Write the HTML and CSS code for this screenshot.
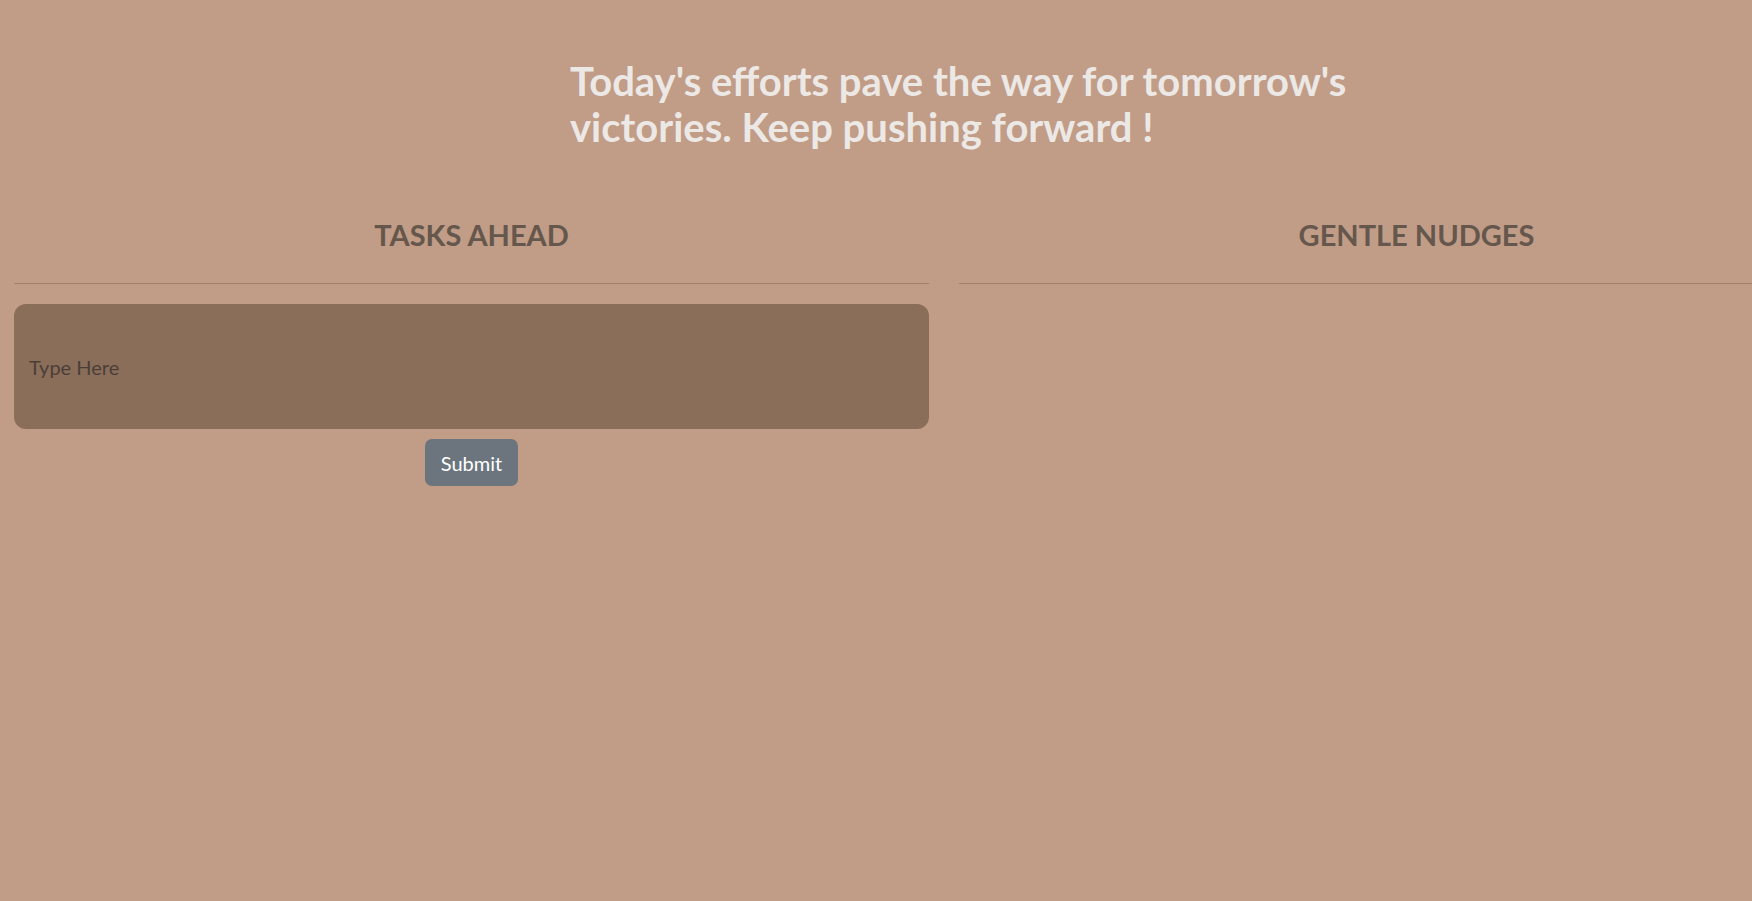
FILE: index.html
```html
<!DOCTYPE html>
<html lang="en">
<head>
<meta charset="utf-8">
<title>Tasks</title>
<link rel="stylesheet" href="styles.css">
</head>
<body>
<header class="hero">
  <h1 class="hero-title">Today's efforts pave the way for tomorrow's<br>victories. Keep pushing forward !</h1>
</header>
<main class="board">
  <section class="column">
    <h2 class="column-title">TASKS AHEAD</h2>
    <hr class="divider">
    <form class="task-form">
      <input class="task-input" type="text" placeholder="Type Here">
      <button class="submit-btn" type="button">Submit</button>
    </form>
  </section>
  <section class="column">
    <h2 class="column-title">GENTLE NUDGES</h2>
    <hr class="divider">
  </section>
</main>
</body>
</html>
```

FILE: styles.css
```css
html, body {
  margin: 0;
  padding: 0;
  background: #c19c87;
  overflow: hidden;
}
body {
  font-family: Lato, "Open Sans", sans-serif;
  width: 1752px;
  height: 901px;
}
.hero {
  padding: 58px 0 0 570px;
}
.hero-title {
  margin: 0;
  font-size: 40px;
  line-height: 46px;
  font-weight: 700;
  color: #ece8e5;
  white-space: nowrap;
}
.board {
  display: grid;
  grid-template-columns: 915px 915px;
  column-gap: 30px;
  padding: 67px 0 0 14px;
}
.column {
  display: flex;
  flex-direction: column;
}
.column-title {
  margin: 0;
  text-align: center;
  font-size: 29px;
  line-height: 36px;
  font-weight: 700;
  color: #65574c;
}
.divider {
  margin: 30px 0 0;
  border: 0;
  border-top: 1px solid #a0806c;
  height: 0;
}
.task-form {
  display: flex;
  flex-direction: column;
  align-items: center;
  margin-top: 20px;
}
.task-input {
  box-sizing: border-box;
  width: 100%;
  height: 125px;
  border: 0;
  border-radius: 12px;
  background: #8b6e59;
  padding: 0 15px;
  font-family: inherit;
  font-size: 20px;
  color: #3f352f;
  outline: none;
}
.task-input::placeholder {
  color: #4a3f38;
}
.submit-btn {
  margin-top: 10px;
  height: 47px;
  padding: 0 16px;
  border: 0;
  border-radius: 7px;
  background: #6c757d;
  color: #ffffff;
  font-family: inherit;
  font-size: 20px;
  cursor: pointer;
}
```
